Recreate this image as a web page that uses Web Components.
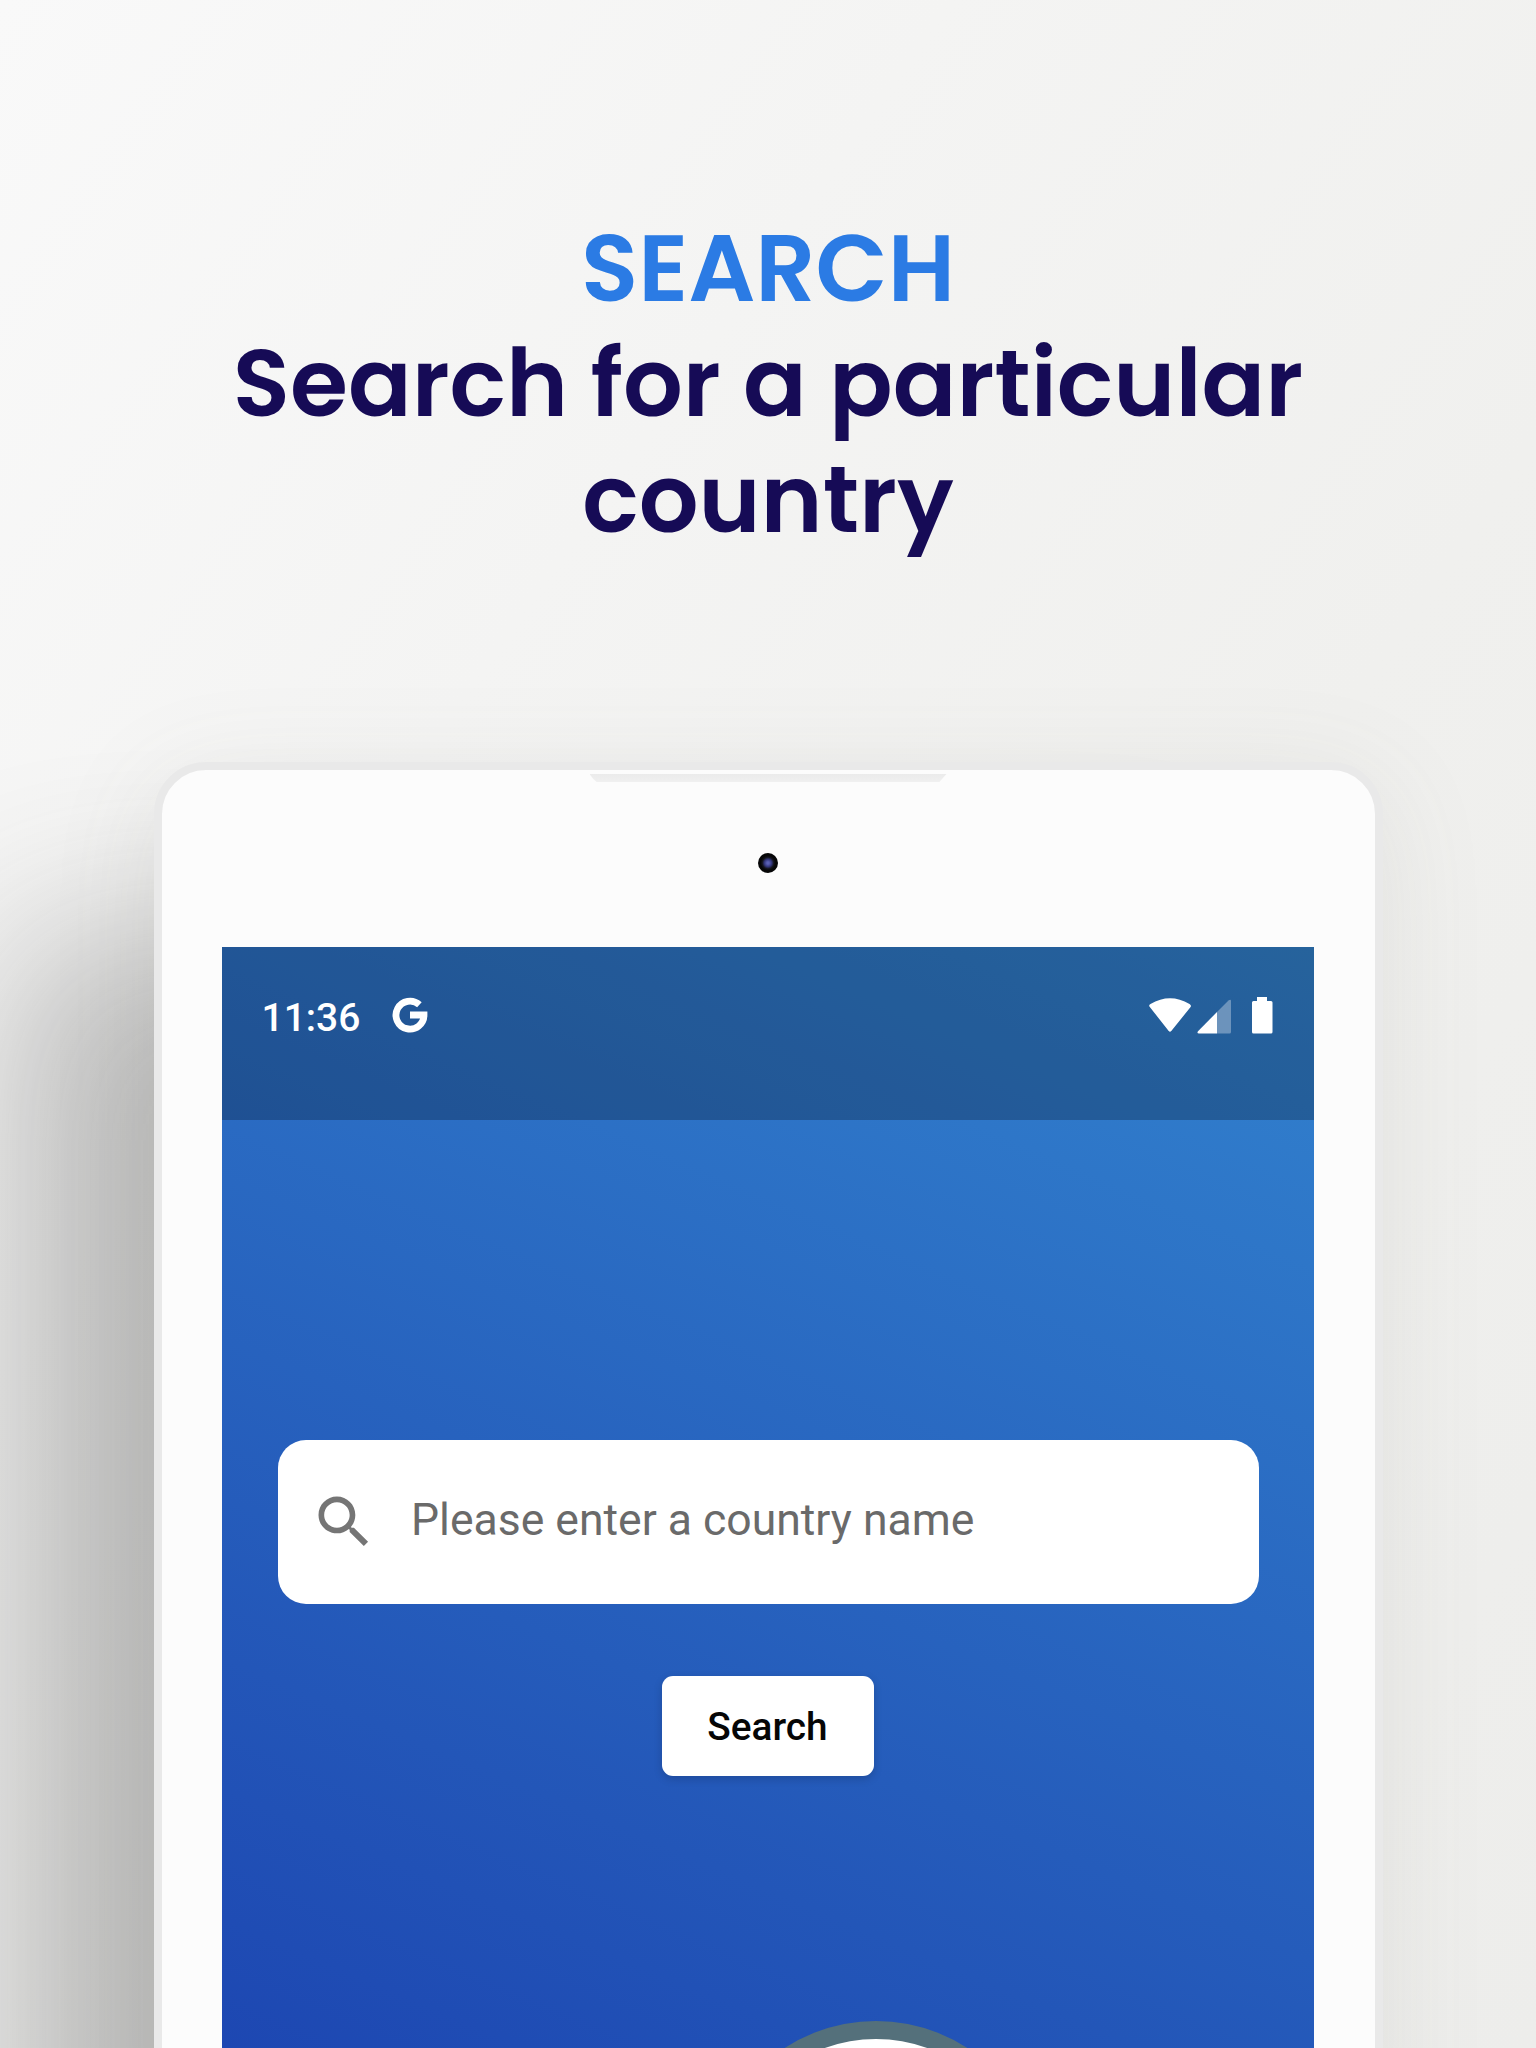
<!DOCTYPE html>
<html lang="en"><head><meta charset="utf-8"><title>Search</title>
<style>
html,body{margin:0;width:1536px;height:2048px;overflow:hidden}
</style></head><body>
<promo-page>
  <promo-title slot="title" kicker="SEARCH" first="Search for a particular" second="country"></promo-title>
  <tablet-frame>
    <status-bar time="11:36"></status-bar>
    <search-field>Please enter a country name</search-field>
    <search-button>Search</search-button>
    <round-badge></round-badge>
  </tablet-frame>
</promo-page>
<script>
const define = (name, html) => customElements.define(name, class extends HTMLElement {
  constructor(){ super(); this.attachShadow({mode:'open'}).innerHTML =
    typeof html === 'function' ? html(this) : html; }
});

define('promo-page', `<style>
:host{display:flex;flex-direction:column;align-items:center;width:1536px;height:2048px;overflow:hidden;
 background:linear-gradient(125deg,#f9f9f9 0%,#f4f4f3 32%,#f0f0ee 62%,#ededeb 100%)}
slot[name=title]{display:block}
</style><slot name="title"></slot><slot></slot>`);

define('promo-title', el => `<style>
:host{display:flex;flex-direction:column;align-items:center;box-sizing:border-box;height:762px;padding-top:211px;
 font:600 93.900px/115.300px Poppins,Inter,"Liberation Sans",sans-serif;color:#160b56;white-space:nowrap}
.k{color:#2b7be4}
</style><div class="k">${el.getAttribute('kicker')}</div><div>${el.getAttribute('first')}</div><div>${el.getAttribute('second')}</div>`);

define('tablet-frame', `<style>
:host{display:block;box-sizing:border-box;width:1229px;height:1400px;flex:none;border:8px solid #e9e9e9;border-radius:52px;
 background:#fcfcfc;box-shadow:-165px 150px 175px -20px rgba(60,60,58,.3),0 20px 110px rgba(110,110,100,.1)}
.top{display:flex;flex-direction:column;align-items:center;height:177px}
.speaker{width:357px;height:8px;margin-top:4px;background:linear-gradient(#ebebeb,#f0f0f0);clip-path:polygon(0 0,100% 0,99% 50%,98% 100%,2% 100%,1% 60%)}
.cam{width:20px;height:20px;border-radius:50%;margin-top:71px;background:radial-gradient(circle,#5a60b4 0 8%,#33367c 26%,#14151f 40%,#060607 52%)}
.screen{display:flex;flex-direction:column;align-items:center;width:1092px;height:1101px;margin:0 auto;overflow:hidden;
 background:linear-gradient(23deg,#1d47b2,#2356b8 25%,#3282ce)}
</style><div class="top"><div class="speaker"></div><div class="cam"></div></div><div class="screen"><slot></slot></div>`);

define('status-bar', el => `<style>
:host{display:flex;box-sizing:border-box;width:100%;height:173px;flex:none;background:rgba(0,0,0,.24);padding:48px 40px 0 39.500px;align-items:flex-start;color:#fff;
 font:500 39px/46px Roboto,sans-serif}
svg{display:block}.g{margin:2px 0 0 31.500px}.s{margin-left:auto;margin-top:1.500px}
</style><span>${el.getAttribute('time')}</span>
<svg class="g" width="36" height="36" viewBox="0 0 36 36" fill="none" stroke="#fff" stroke-width="6.8"><path d="M27.4 7.700A14 14 0 1 0 32 18H18"/></svg>
<svg class="s" width="126" height="38" viewBox="0 0 126 38" fill="#fff">
<path d="M2.200 10.500Q0 8.500 2.500 7Q22-4.500 41.500 7Q44 8.500 42.200 10.500L23.300 34Q22 35.500 20.700 34Z"/>
<path opacity=".33" d="M69 15L80.500 3.500Q83 2 83 4V35Q83 36.500 81.500 36.500H69Z"/>
<path d="M69 15V36.500H51Q48.500 36.500 50 34.200Z"/>
<path d="M109 0H119V4H123Q124.500 4 124.500 5.500V35Q124.500 36.500 123 36.500H105.500Q104 36.500 104 35V5.500Q104 4 105.500 4H109Z"/></svg>`);

define('search-field', `<style>
:host{display:flex;align-items:center;box-sizing:border-box;width:981px;height:164px;flex:none;margin-top:319.500px;padding-left:32px;border-radius:28px;background:#fff;color:#6a6a6a;
 font:400 44.500px/52px Roboto,sans-serif}
svg{width:68px;height:68px;margin-right:33.500px;fill:#757575}
span{padding-bottom:4px}
</style><svg viewBox="0 0 24 24"><path d="M15.500 14h-.79l-.28-.27C15.410 12.590 16 11.110 16 9.500 16 5.910 13.090 3 9.500 3S3 5.910 3 9.500 5.910 16 9.500 16c1.610 0 3.090-.59 4.230-1.570l.27.28v.79l5 4.990L20.490 19l-4.990-5zm-6 0C7.010 14 5 11.990 5 9.500S7.010 5 9.500 5 14 7.010 14 9.500 11.990 14 9.500 14z"/></svg><span><slot></slot></span>`);

define('search-button', `<style>
:host{display:flex;align-items:center;justify-content:center;box-sizing:border-box;width:212px;height:100.500px;padding:2px 1px 0 0;flex:none;margin-top:72px;border-radius:11px;background:#fff;color:#060606;
 box-shadow:0 3px 9px rgba(0,0,0,.17);font:500 38.800px/46px Roboto,sans-serif}
</style><slot></slot>`);

define('round-badge', `<style>
:host{display:block;box-sizing:border-box;width:336px;height:336px;flex:none;margin:245px 0 0 216px;border:18.500px solid #54707b;border-radius:50%;background:#fff}
</style>`);
</script></body></html>
